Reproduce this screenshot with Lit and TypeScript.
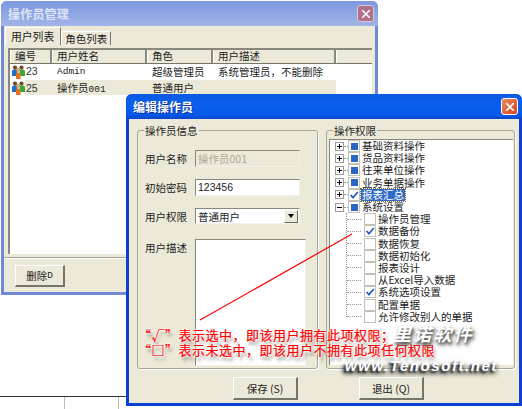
import { LitElement, html, css, svg } from "lit";
import { customElement } from "lit/decorators.js";

const closeIcon = svg`<svg viewBox="0 0 16 16" width="10" height="10"><path d="M2 2 L14 14 M14 2 L2 14" stroke="#fff" stroke-width="2.6" fill="none"/></svg>`;

const usersIcon = html`<svg class="uicon" viewBox="0 0 15 14" width="15" height="14">
  <circle cx="4" cy="2.6" r="2.1" fill="#6b4a2a"/><circle cx="10.5" cy="2.6" r="2.1" fill="#6b4a2a"/>
  <path d="M1 11 V6.5 Q1 4.6 3 4.6 H6 V11 Z" fill="#1d6fc4"/>
  <path d="M9 4.6 H12 Q14 4.6 14 6.5 V11 H9 Z" fill="#3da832"/>
  <circle cx="7.3" cy="5" r="2" fill="#d9a066"/>
  <path d="M5 14 V9 Q5 7.2 7.3 7.2 Q9.6 7.2 9.6 9 V14 Z" fill="#e2761c"/>
</svg>`;

type Node = { t: string; state: "none" | "mixed" | "check"; exp?: "+" | "-"; sel?: boolean; child?: boolean };
const tree: Node[] = [
  { t: "基础资料操作", state: "mixed", exp: "+" },
  { t: "货品资料操作", state: "mixed", exp: "+" },
  { t: "往来单位操作", state: "mixed", exp: "+" },
  { t: "业务单据操作", state: "mixed", exp: "+" },
  { t: "报表汇总", state: "check", exp: "+", sel: true },
  { t: "系统设置", state: "mixed", exp: "-" },
  { t: "操作员管理", state: "none", child: true },
  { t: "数据备份", state: "check", child: true },
  { t: "数据恢复", state: "none", child: true },
  { t: "数据初始化", state: "none", child: true },
  { t: "报表设计", state: "none", child: true },
  { t: "从Excel导入数据", state: "none", child: true },
  { t: "系统选项设置", state: "check", child: true },
  { t: "配置单据", state: "none", child: true },
  { t: "允许修改别人的单据", state: "none", child: true },
];

@customElement("app-root")
export class AppRoot extends LitElement {
  static styles = css`
    :host { display: block; position: relative; width: 522px; height: 409px; overflow: hidden; background: #fff;
      font-family: "Noto Sans CJK SC", "Liberation Sans", sans-serif; font-size: 10.5px; color: #1c1c1c; }
    .sheet { position: absolute; left: 0; right: 0; top: 396px; bottom: 0; border-top: 1px solid #333; display: flex; }
    .sheet i { display: block; width: 53px; height: 12px; border-right: 1px solid #bbb; }
    .sheet i:first-child { width: 64px; }
    .win { position: absolute; box-sizing: border-box; display: flex; flex-direction: column; background: #ece9d8; border-radius: 6px 6px 0 0; }
    .back { left: 1px; top: 1px; width: 377px; height: 294px; border: 3px solid #7088d8; border-top: 0; }
    .front { left: 126px; top: 94px; width: 396px; height: 312px; border: 3px solid #0a3fd8; border-top: 0; }
    .title { flex: none; height: 25px; margin: 0 -3px; padding: 0 4px 0 7px; display: flex; align-items: center; justify-content: space-between;
      border-radius: 6px 6px 0 0; font-weight: 700; font-size: 12px; color: #fff; }
    .back .title { background: linear-gradient(180deg, #7c98e0 0%, #8ba3e3 40%, #a2b4e8 100%); color: #dfe5f5; letter-spacing: 0.2px; }
    .front .title { background: linear-gradient(180deg, #0a5be0 0%, #0a5ff0 45%, #0658ea 85%, #0a45c8 100%); text-shadow: 1px 1px 0 #0a2f90; }
    .x { width: 17px; height: 17px; box-sizing: border-box; border: 1px solid #fff; border-radius: 3px; display: flex; align-items: center; justify-content: center; }
    .back .x { background: #b2708a; border-color: #d5cbdc; }
    .front .x { background: linear-gradient(135deg, #eb8a63, #d8431c); }
    .tabs { flex: none; display: flex; align-items: flex-end; height: 18px; padding-left: 1px; margin-top: 1px; }
    .tab { box-sizing: border-box; border: 1px solid #fff; border-right-color: #777; border-bottom: 0; height: 14px; padding: 0 3px; line-height: 13px; font-size: 10.5px; white-space: nowrap; }
    .tab.on { height: 18px; padding: 0 6px 0 5px; line-height: 16px; font-size: 10.8px; }
    .panel { flex: 1; min-height: 0; display: flex; flex-direction: column; padding: 3px 0 0 4px; }
    .list { height: 206px; box-sizing: border-box; background: #fff; border: 2px solid #8a887c; border-right: 0; border-bottom: 0; margin-right: 3px; overflow: hidden; }
    .cols, .row { display: grid; grid-template-columns: 42px 95px 66px 123px 1fr; }
    .cols { height: 13px; line-height: 12px; background: #ece9d8; border-bottom: 1px solid #77756a; }
    .cols span { padding-left: 5px; border-right: 2px solid #8a887c; box-shadow: inset 1px 0 0 #fff; }
    .cols span:last-child { border-right: 0; }
    .row { height: 15.5px; line-height: 15px; white-space: nowrap; }
    .row > span { padding-left: 5px; }
    .row .id { display: flex; align-items: center; padding-left: 1px; font-family: "Liberation Sans", sans-serif; color: #333; }
    .row.sel { background: linear-gradient(90deg, #fff 15px, #ece9d8 15px); }
    .row.sel > span:last-child { background: #fff; }
    .uicon { flex: none; }
    .mono { font-family: "Liberation Mono", "Noto Sans CJK SC", monospace; font-size: 9.5px; }
    .foot { flex: 1; margin: 3px 0 0 -4px; border-top: 1px solid #a5a397; box-shadow: inset 0 1px 0 #fff; padding: 7px 0 0 11px; }
    .btn { box-sizing: border-box; display: flex; align-items: center; justify-content: center; background: #ece9d8; border: 1px solid #fff; border-right: 2px solid #77756a; border-bottom: 2px solid #77756a; font-size: 10.5px; white-space: nowrap; }
    .del { width: 50px; height: 22px; }
    .body { flex: 1; min-height: 0; display: flex; flex-direction: column; padding: 0 5px; }
    .groups { flex: none; display: grid; grid-template-columns: 181px 189px; column-gap: 8px; padding: 11px 0 0 3px; height: 239px; box-sizing: content-box; }
    .group { box-sizing: border-box; height: 239px; border: 1px solid #a8a698; border-radius: 3px; box-shadow: 1px 1px 0 #fff; position: relative; }
    .legend { position: absolute; left: 6px; top: -7px; background: #ece9d8; padding: 0 1px; line-height: 13px; font-size: 10.5px; }
    .form { display: grid; grid-template-columns: 50px 1fr; padding-top: 19px; padding-left: 7px; }
    .lab { line-height: 17px; }
    .inp { box-sizing: border-box; width: 105px; height: 17px; background: #fff; border: 1px solid #8a887c; border-right-color: #f4f2e8; border-bottom-color: #f4f2e8; padding-left: 2px; line-height: 15px; font-family: "Liberation Sans", "Noto Sans CJK SC", sans-serif; font-size: 10.5px; margin-bottom: 12px; }
    .inp.dis { background: #ece9d8; color: #aca899; font-family: "Noto Sans CJK SC", sans-serif; }
    .combo { display: flex; justify-content: space-between; align-items: center; font-family: "Noto Sans CJK SC", sans-serif; height: 16px; margin-bottom: 15px; padding-right: 1px; }
    .arrow { width: 14px; height: 13px; background: #ece9d8; border: 1px solid #fff; border-right-color: #666; border-bottom-color: #666; box-sizing: border-box; display: flex; align-items: center; justify-content: center; }
    .arrow::after { content: ""; border: 3.5px solid transparent; border-top: 4px solid #000; border-bottom: 0; }
    .area { box-sizing: border-box; width: 111px; height: 127px; background: #fff; border: 1px solid #8a887c; border-right-color: #f4f2e8; border-bottom-color: #f4f2e8; }
    .tree { position: absolute; left: 2px; right: 1px; top: 8px; bottom: 3px; background: #fff; border: 1px solid #8a887c; border-bottom: 0; border-right: 0; overflow: hidden; padding-left: 5px; }
    .node { height: 12.2px; display: flex; align-items: center; white-space: nowrap; line-height: 12px; position: relative; }
    .exp { flex: none; box-sizing: border-box; width: 9px; height: 9px; border: 1px solid #9a9a9a; position: relative; background: #fff; }
    .exp::before { content: ""; position: absolute; left: 1px; right: 1px; top: 3px; height: 1px; background: #000; }
    .exp.plus::after { content: ""; position: absolute; top: 1px; bottom: 1px; left: 3px; width: 1px; background: #000; }
    .dash { flex: none; width: 4px; border-top: 1px dotted #999; margin-right: 0; }
    .cb { flex: none; box-sizing: border-box; width: 12px; height: 12px; border: 1px solid #c4c2b6; background: #fff; display: flex; align-items: center; justify-content: center; margin-right: 2px; }
    .cb b { display: block; width: 7px; height: 7px; background: #2b66c4; }
    .kid { padding-left: 4px; }
    .kid .stem { flex: none; width: 14px; border-top: 1px dotted #999; margin-left: 8px; margin-right: 3px; box-shadow: none; }
    .vline { position: absolute; left: 16px; top: 73px; height: 104px; border-left: 1px dotted #999; }
    .txt.sel { background: #316ac5; color: #fff; outline: 1px dotted #8a6a20; padding: 0 1px; margin-left: -1px; }
    .acts { flex: 1; display: grid; grid-template-columns: 65px 65px; column-gap: 61px; padding: 8px 0 0 99px; }
    .acts .btn { height: 23px; }
    .line { position: absolute; left: 0; top: 0; pointer-events: none; }
    .note { position: absolute; left: 138px; top: 328px; color: #f00; font-size: 13px; line-height: 14.5px; letter-spacing: 0.5px; white-space: nowrap; -webkit-text-stroke: 0.2px #f00;
      text-shadow: 0 0 2px #fff, 0 0 2px #fff, 0 0 3px #fff, 2px 4px 3px rgba(60,60,50,.55); }
    .brand { position: absolute; left: 393px; top: 322px; color: #fff; font-size: 18px; line-height: 22px; font-weight: 700; letter-spacing: 2.2px; font-style: italic; white-space: nowrap; text-shadow: 1px 2px 3px #555, 2px 3px 4px #666; }
    .url { position: absolute; left: 345px; top: 357px; color: #fff; font-family: "Liberation Sans", sans-serif; font-size: 15px; line-height: 18px; font-weight: 700; font-style: italic; letter-spacing: 1.55px; white-space: nowrap; text-shadow: -2px 2px 2px #333, -3px 3px 4px #444, 1px 3px 4px #555; }
  `;

  node(n: Node) {
    const cb = html`<span class="cb">${n.state === "mixed" ? html`<b></b>` : n.state === "check"
      ? html`<svg viewBox="0 0 10 10" width="10" height="10"><path d="M1.5 5 L4 7.6 L8.8 2" stroke="#2b5fc0" stroke-width="1.8" fill="none"/></svg>` : ""}</span>`;
    return n.child
      ? html`<div class="node kid"><span class="stem"></span>${cb}<span class="txt">${n.t}</span></div>`
      : html`<div class="node"><span class="exp ${n.exp === "+" ? "plus" : ""}"></span><span class="dash"></span>${cb}<span class="txt ${n.sel ? "sel" : ""}">${n.t}</span></div>`;
  }

  render() {
    return html`
      <div class="sheet"><i></i><i></i></div>
      <section class="win back">
        <div class="title"><span>操作员管理</span><span class="x">${closeIcon}</span></div>
        <div class="tabs"><span class="tab on">用户列表</span><span class="tab">角色列表</span></div>
        <div class="panel">
          <div class="list">
            <div class="cols"><span>编号</span><span>用户姓名</span><span>角色</span><span>用户描述</span><span></span></div>
            <div class="row"><span class="id">${usersIcon}23</span><span class="mono">Admin</span><span>超级管理员</span><span>系统管理员，不能删除</span><span></span></div>
            <div class="row sel"><span class="id">${usersIcon}25</span><span>操作员<span class="mono">001</span></span><span>普通用户</span><span></span><span></span></div>
          </div>
          <div class="foot"><div class="btn del">删除<span class="mono">D</span></div></div>
        </div>
      </section>
      <section class="win front">
        <div class="title"><span>编辑操作员</span><span class="x">${closeIcon}</span></div>
        <div class="body">
          <div class="groups">
            <div class="group">
              <span class="legend">操作员信息</span>
              <div class="form">
                <span class="lab">用户名称</span><div class="inp dis">操作员001</div>
                <span class="lab">初始密码</span><div class="inp">123456</div>
                <span class="lab">用户权限</span><div class="inp combo"><span>普通用户</span><span class="arrow"></span></div>
                <span class="lab">用户描述</span><div class="area"></div>
              </div>
            </div>
            <div class="group">
              <span class="legend">操作权限</span>
              <div class="tree"><span class="vline"></span>${tree.map((n) => this.node(n))}</div>
            </div>
          </div>
          <div class="acts"><div class="btn">保存 (S)</div><div class="btn">退出 (Q)</div></div>
        </div>
      </section>
      <svg class="line" width="522" height="409"><line x1="200" y1="320" x2="352" y2="234" stroke="#f00" stroke-width="1.2"/></svg>
      <div class="note">“√”表示选中，即该用户拥有此项权限；<br>“□”表示未选中，即该用户不拥有此项任何权限</div>
      <div class="brand">里诺软件</div>
      <div class="url">www.Tenosoft.net</div>
    `;
  }
}
